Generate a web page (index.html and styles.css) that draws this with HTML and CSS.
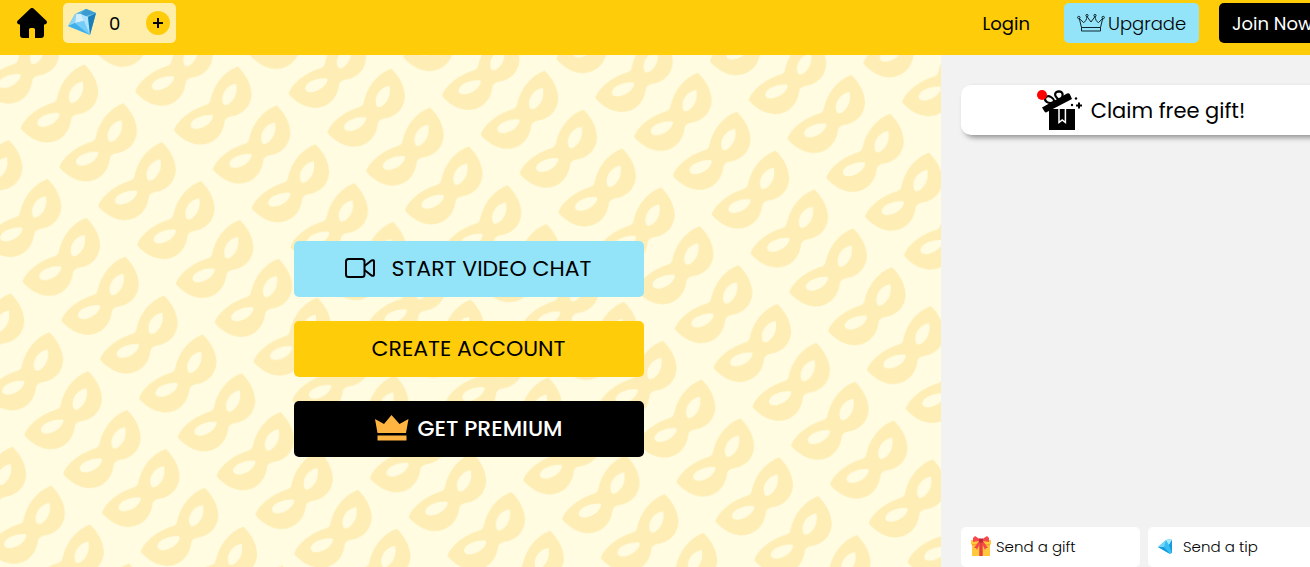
FILE: index.html
```html
<!DOCTYPE html>
<html lang="en">
<head>
  <meta charset="UTF-8">
  <meta name="viewport" content="width=device-width, initial-scale=1">
  <title>Video Chat</title>
  <link rel="stylesheet" href="styles.css">
</head>
<body>
  <header class="topbar">
    <a class="home" href="#" aria-label="Home">
      <svg width="30" height="30" viewBox="0 0 30 30">
        <path d="M13.2.8a2.6 2.6 0 0 1 3.6 0l12.6 12c1.4 1.500.2 3.700-2 3.700H27V27a3 3 0 0 1-3 3h-6v-8.500a1.500 1.500 0 0 0-1.500-1.500h-3a1.500 1.500 0 0 0-1.500 1.500V30H6a3 3 0 0 1-3-3V16.500h-.4c-2.200 0-3.400-2.200-2-3.700z"/>
      </svg>
    </a>
    <div class="wallet">
      <svg class="gem" width="28" height="26" viewBox="0 0 28 26">
        <path fill="#6cc4ee" d="M0 17 7 5 18 0 28 4 22 26z"/>
        <path fill="#d3eefb" d="M8 5 13 4 16 12 7 14z"/>
        <path fill="#5ab4e2" d="M8 4.500 18 0 24 2 13 5z"/>
        <path fill="#3a9bd0" d="M18 0 28 4 15 8 13 4z"/>
        <path fill="#8fd3f5" d="M0 17 8 5 7 14z"/>
        <path fill="#3fb0ea" d="M0 17 7 14 22 26z"/>
        <path fill="#74ccf8" d="M7 14 16 12 22 26z"/>
        <path fill="#aee3fb" d="M13 5 20 8 22 26 16 12z"/>
        <path fill="#1a7fb9" d="M20 8 28 4 22 26z"/>
      </svg>
      <span class="balance">0</span>
      <button class="add" aria-label="Add gems">
        <svg width="10" height="10" viewBox="0 0 10 10"><path d="M5 0v10M0 5h10" stroke="#000" stroke-width="2"/></svg>
      </button>
    </div>
    <nav class="actions">
      <a class="btn login" href="#">Login</a>
      <a class="btn upgrade" href="#">
        <svg width="28" height="18" viewBox="0 0 28 18" fill="none" stroke="#10262c" stroke-width="1">
          <path d="M4.500 13.500 2.300 4.500 6.500 8.500C8.500 8 9.500 5.500 10 2.500L14 8l4-5.500c.5 3 1.500 5.500 3.500 6l4.200-4-2.200 9zM4.500 13.500h19v3.500h-19z"/>
          <circle cx="1.800" cy="3.500" r="1.200"/><circle cx="10" cy="1.500" r="1.100"/><circle cx="18" cy="1.500" r="1.100"/><circle cx="26.200" cy="3.500" r="1.200"/>
        </svg>
        Upgrade
      </a>
      <a class="btn join" href="#">Join Now</a>
    </nav>
  </header>

  <main class="content">
    <section class="stage">
      <svg class="masks" width="100%" height="100%" aria-hidden="true">
        <defs>
          <path id="mask" fill="#feeeb5" fill-rule="evenodd" d="M256 43C284 70 296 100 296 127 294 165 265 188 236 193 222 196 215 200 213 214 207 250 180 278 140 279 112 279 82 262 62 238 70 210 110 176 155 161 168 158 170 154 173 142 181 105 210 60 256 43zM112 222C112 205 142 190 175 190 182 191 180 201 168 214 150 231 115 241 112 222zM250 95C254 115 250 140 226 157 213 163 209 158 208 142 208 122 225 99 250 95z"/>
          <g id="row">
            <use href="#mask"/>
            <use href="#mask" x="115" y="115"/>
            <use href="#mask" x="230" y="230"/>
            <use href="#mask" x="345" y="345"/>
          </g>
          <pattern id="mask-pattern" width="460" height="460" patternUnits="userSpaceOnUse" patternTransform="matrix(.3334 .00457 .00403 .3334 -1 -6.2)">
            <use href="#row"/>
            <use href="#row" x="-460"/>
            <use href="#row" y="-460"/>
            <use href="#row" x="-460" y="-460"/>
          </pattern>
        </defs>
        <rect width="100%" height="100%" fill="url(#mask-pattern)"/>
      </svg>
      <div class="menu">
        <button class="menu-btn start">
          <svg width="30" height="20" viewBox="0 0 30 20" fill="none" stroke="#000" stroke-width="2" stroke-linejoin="round">
            <rect x="1" y="1" width="18.500" height="18" rx="2.500"/>
            <path d="M19.500 8 26.500 2.500q2.500-1 2.500 1v13q0 2-2.500 1L19.500 12"/>
          </svg>
          START VIDEO CHAT
        </button>
        <button class="menu-btn create">CREATE ACCOUNT</button>
        <button class="menu-btn premium">
          <svg width="34" height="26" viewBox="0 0 34 26" fill="#ffb441">
            <path d="M0 4 9 9 16.500 0 24.500 9 33.500 4 31 18H2.500zM2.500 20.500h29V25q0 .5-.5.500H3q-.5 0-.5-.5z"/>
          </svg>
          GET PREMIUM
        </button>
      </div>
    </section>

    <aside class="panel">
      <button class="claim">
        <span class="gift-icon">
          <svg width="42" height="40" viewBox="0 0 42 40">
            <path d="M8 19h26v21H8z"/>
            <path d="M1 17.500 26 3.500q2-1 3 1L31 9 5 22.500q-1 0-1.500-1z"/>
            <path d="M12.500 12C8 15 2.500 11 4.500 7.500c3-3 8 0 9 4zM17.500 9.500C12 5 14 1.500 18 1.300c5 .3 4 5.700 2 7z" fill="#fff" stroke="#000" stroke-width="2.200"/>
            <path d="M18 19v13.500l3.200-2.500 3.200 2.500V19" fill="none" stroke="#fff" stroke-width="1.500"/>
            <path d="M38 12.500v6M35 15.500h6" stroke="#000" stroke-width="2"/>
            <circle cx="35" cy="8.500" r="1.200"/><circle cx="31" cy="15" r="1.200"/>
          </svg>
          <span class="dot"></span>
        </span>
        Claim free gift!
      </button>
      <div class="send">
        <button class="send-btn">
          <svg width="20" height="20" viewBox="0 0 20 20">
            <path fill="#ffc83d" d="M0 4h20v4l-1 1v11H1V9L0 8z"/>
            <path fill="#f3a52c" d="M1 8h18v1.500H1z"/>
            <path fill="#e6403e" d="M8.300 5h3.400v15H8.300z"/>
            <path fill="#f7494c" d="M10 4 4 0 2 2v4l6-1-5 7 2 0 1 2 4-9 4 9 1-2h2l-5-7 6 1V2l-2-2z"/>
            <path fill="#bd2936" d="M8 2.500h4v4H8z"/>
          </svg>
          Send a gift
        </button>
        <button class="send-btn tip">
          <svg width="14" height="15" viewBox="0 0 14 15">
            <path fill="#39bdf3" d="M0 8 8 1 12 0 14 1V14L12 15z"/>
            <path fill="#a8e8fc" d="M8 1 12 0 14 1 11 6z"/>
            <path fill="#72d5fa" d="M0 8 8 1 6 8z"/>
            <path fill="#149bdc" d="M0 8 6 8 12 15zM11 6 14 1V14z"/>
          </svg>
          Send a tip
        </button>
      </div>
    </aside>
  </main>
</body>
</html>
```
FILE: styles.css
```css
* {
  box-sizing: border-box;
}

html {
  overflow: hidden;
}

body {
  margin: 0;
  min-width: 1347px;
  height: 100vh;
  display: flex;
  flex-direction: column;
  font-family: Poppins, Inter, sans-serif;
  color: #000;
}

button {
  border: none;
  padding: 0;
  font: inherit;
  color: inherit;
  cursor: pointer;
}

a {
  color: inherit;
  text-decoration: none;
}

svg {
  display: block;
  flex: none;
}

.topbar {
  flex: none;
  display: flex;
  align-items: flex-start;
  height: 55px;
  padding: 3px 20px 0 17px;
  background-color: #ffcc0a;
}

.home {
  padding-top: 5px;
}

.wallet {
  display: flex;
  align-items: center;
  width: 113px;
  height: 40px;
  margin-left: 16px;
  padding: 0 6px 0 5px;
  border-radius: 5px;
  background-color: #ffedaa;
}

.balance {
  flex: 1;
  padding-left: 13px;
  font-size: 18px;
}

.gem {
  margin-bottom: 2px;
}

.add {
  display: flex;
  align-items: center;
  justify-content: center;
  width: 24px;
  height: 24px;
  border-radius: 50%;
  background-color: #ffcc0a;
}

.actions {
  display: flex;
  gap: 20px;
  margin-left: auto;
}

.btn {
  display: flex;
  align-items: center;
  height: 40px;
  padding: 0 13px;
  border-radius: 5px;
  font-size: 18px;
}

.login {
  padding-right: 14px;
}

.upgrade {
  gap: 3px;
  width: 135px;
  background-color: #93e4f9;
  font-weight: 300;
}

.join {
  width: 108px;
  background-color: #000;
  color: #fff;
  white-space: nowrap;
}

.content {
  flex: 1;
  display: flex;
  min-height: 0;
}

.stage {
  position: relative;
  flex: 1;
  display: flex;
  justify-content: center;
  align-items: center;
  padding-top: 76px;
  background-color: #fffce2;
}

.masks {
  position: absolute;
  inset: 0;
}

.menu {
  position: relative;
  display: flex;
  flex-direction: column;
  gap: 24px;
  width: 350px;
  margin-right: 4px;
}

.menu-btn {
  display: flex;
  align-items: center;
  justify-content: center;
  gap: 9px;
  height: 56px;
  padding-bottom: 2px;
  border-radius: 5px;
  font-size: 22px;
}

.start {
  gap: 16px;
  background-color: #93e4f9;
}

.create {
  background-color: #ffcc0a;
}

.premium {
  background-color: #000;
  color: #fff;
  font-weight: 500;
}

.panel {
  flex: none;
  display: flex;
  flex-direction: column;
  justify-content: space-between;
  width: 406px;
  padding: 30px 20px 0;
  background-color: #f2f2f2;
}

.claim {
  display: flex;
  align-items: center;
  justify-content: center;
  gap: 8px;
  height: 50px;
  padding-right: 2px;
  border-radius: 10px;
  background-color: #fff;
  box-shadow: 3px 3px 5px #999;
  font-size: 21px;
}

.gift-icon {
  position: relative;
}

.dot {
  position: absolute;
  top: 0;
  left: -4px;
  width: 10px;
  height: 10px;
  border-radius: 50%;
  background-color: #f00;
}

.send {
  display: flex;
  gap: 8px;
}

.send-btn {
  flex: 1;
  display: flex;
  align-items: center;
  gap: 5px;
  height: 40px;
  padding: 0 0 2px 10px;
  border-radius: 5px;
  background-color: #fff;
  font-size: 15px;
  font-weight: 300;
}

.tip {
  gap: 11px;
}
```
